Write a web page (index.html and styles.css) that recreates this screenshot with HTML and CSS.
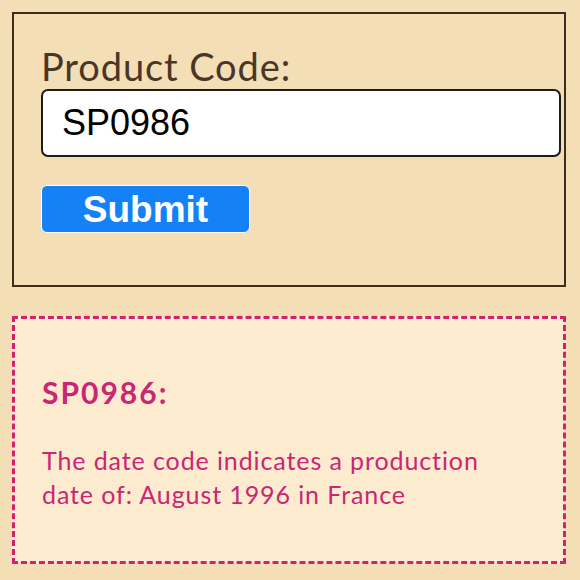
FILE: index.html
```html
<!DOCTYPE html>
<html>
<head>
<meta charset="utf-8">
<link rel="stylesheet" href="styles.css">
</head>
<body>
<div class="page">
  <form class="lookup">
    <label class="label" for="code">Product Code:</label>
    <input class="input" id="code" type="text" value="SP0986">
    <button class="submit" type="button">Submit</button>
  </form>
  <section class="result">
    <h2 class="result-title">SP0986:</h2>
    <p class="result-text">The date code indicates a production date of: August 1996 in France</p>
  </section>
</div>
</body>
</html>
```
FILE: styles.css
```css
html, body {
  margin: 0;
  padding: 0;
  background: #f3deb5;
}
.page {
  padding: 12px 14px 0 12px;
  display: flex;
  flex-direction: column;
  gap: 29px;
}
.lookup {
  border: 2px solid #3e2c1f;
  height: 275px;
  box-sizing: border-box;
  padding: 31px 4px 0 27px;
  display: flex;
  flex-direction: column;
  align-items: flex-start;
}
.label {
  font-family: Lato, "Noto Sans", sans-serif;
  font-size: 38px;
  letter-spacing: 0.9px;
  color: #4a3627;
  line-height: 42px;
}
.input {
  margin-top: 2px;
  width: 520px;
  height: 68px;
  box-sizing: border-box;
  border: 2px solid #1c1c1c;
  border-radius: 7px;
  background: #fff;
  padding: 0 0 0 19px;
  font-family: "Liberation Sans", Arial, sans-serif;
  font-size: 36px;
  color: #000;
  outline: none;
}
.submit {
  margin-top: 28px;
  width: 209px;
  height: 48px;
  box-sizing: border-box;
  border: 1px solid #fff;
  border-radius: 6px;
  background: #1581f7;
  color: #fff;
  font-family: "Liberation Sans", Arial, sans-serif;
  font-weight: bold;
  font-size: 37px;
  line-height: 1;
  padding: 0;
}
.result {
  border: 3px dashed #d2226f;
  background: #fdebd0;
  height: 248px;
  box-sizing: border-box;
  padding: 56px 70px 0 27px;
}
.result-title {
  margin: 0;
  font-family: Lato, "Noto Sans", sans-serif;
  font-weight: bold;
  font-size: 30px;
  letter-spacing: 2px;
  line-height: 34px;
  color: #c92674;
}
.result-text {
  margin: 34px 0 0;
  font-family: Lato, "Noto Sans", sans-serif;
  font-size: 25px;
  letter-spacing: 0.9px;
  line-height: 34px;
  color: #c92674;
}
```
